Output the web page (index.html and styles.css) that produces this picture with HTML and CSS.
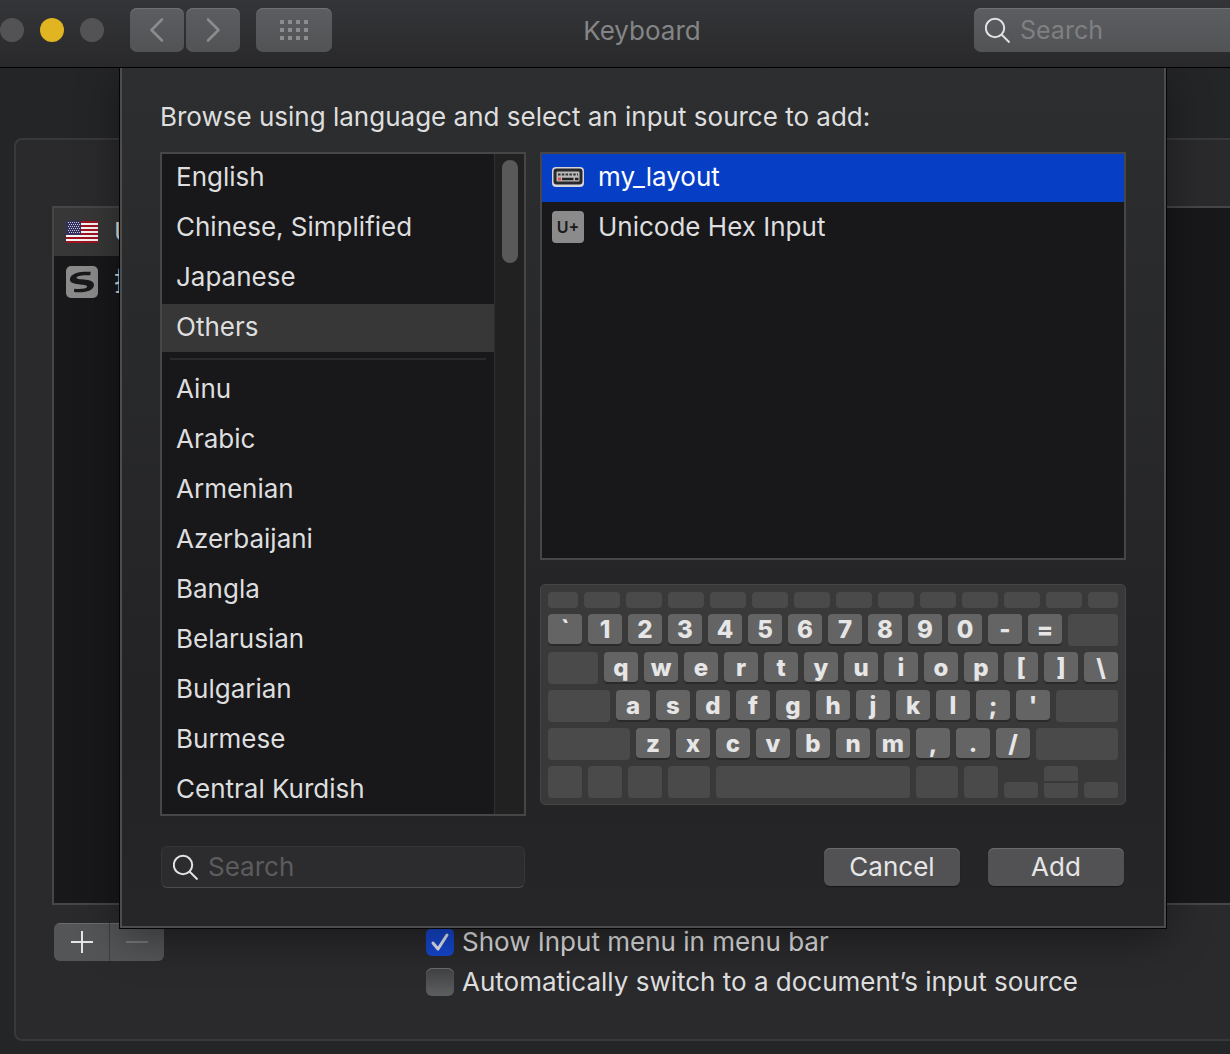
FILE: index.html
```html
<!DOCTYPE html>
<html lang="en">
<head>
<meta charset="utf-8">
<meta name="viewport" content="width=device-width, initial-scale=1">
<title>Keyboard</title>
<link rel="stylesheet" href="styles.css">
</head>
<body>
<header class="toolbar">
  <div class="lights">
    <span class="light"></span><span class="light light-minimize"></span><span class="light"></span>
  </div>
  <nav class="nav">
    <button class="tool" type="button" aria-label="Back"><svg width="54" height="44" viewBox="0 0 54 44"><path d="M32 11.500 21.500 22 32 32.500" fill="none" stroke="#8b8c8e" stroke-width="2.600" stroke-linecap="round" stroke-linejoin="round"/></svg></button>
    <button class="tool" type="button" aria-label="Forward"><svg width="54" height="44" viewBox="0 0 54 44"><path d="M22 11.500 32.500 22 22 32.500" fill="none" stroke="#8b8c8e" stroke-width="2.600" stroke-linecap="round" stroke-linejoin="round"/></svg></button>
  </nav>
  <button class="tool tool-grid" type="button" aria-label="Show all"><svg width="28" height="20" viewBox="0 0 28 20"><path d="M0 0h4v4H0zM8 0h4v4H8zM16 0h4v4h-4zM24 0h4v4h-4zM0 8h4v4H0zM8 8h4v4H8zM16 8h4v4h-4zM24 8h4v4h-4zM0 16h4v4H0zM8 16h4v4H8zM16 16h4v4h-4zM24 16h4v4h-4z" fill="#8b8c8e"/></svg></button>
  <h1 class="title">Keyboard</h1>
  <label class="search search-toolbar">
    <svg width="26" height="26" viewBox="0 0 26 26"><g fill="none" stroke="#e2e2e3" stroke-width="2"><circle cx="10" cy="11" r="9.200"/><path d="m16.500 17.500 8 8"/></g></svg>
    <input type="search" placeholder="Search" aria-label="Search preferences">
  </label>
</header>

<main class="window">
  <section class="pane">
    <div class="pane-body">
      <ul class="sources">
        <li class="source source-selected">
          <svg width="32" height="22" viewBox="0 0 32 22"><path fill="#f5f5f5" d="M0 0h32v22H0z"/><path d="M0 1h32M0 5h32M0 9h32M0 13h32M0 17h32M0 21h32" stroke="#a01420" stroke-width="2"/><path fill="#34315f" d="M0 0h15v14H0z"/><path d="M2 1.500h12M3 3.500h11M2 5.500h12M3 7.500h11M2 9.500h12M3 11.500h11" stroke="#c9c8da" stroke-width="1" stroke-dasharray="1 1"/></svg>
          <span>U.S.</span>
        </li>
        <li class="source">
          <svg width="32" height="32" viewBox="0 0 32 32"><rect width="32" height="32" rx="5" fill="#8b8b8c"/><path fill="#19191b" d="M24.700 5.800 24.300 9.200C18 9 11.500 9.500 10.500 11.500c-.5 2 6 1.500 11.500 2.500 5 1 6.700 3.500 5.700 6.500-1.700 4.500-8 5.700-13.700 5.700-3.500 0-6-.3-6-.3L8.200 22.700c6 .5 11.800.3 12.800-1.700.8-2-4-2-8.500-2.700C6.500 17.500 3.200 16 4 12.500 5 8 12 6 18 5.800c3 0 5 0 6.700 0z"/></svg>
          <span>搜</span>
        </li>
      </ul>
      <div class="preview"></div>
    </div>
    <div class="pane-footer">
      <div class="segmented">
        <button type="button" aria-label="Add input source"><svg width="22" height="22" viewBox="0 0 22 22"><path d="M11 0v22M0 11h22" stroke="#e6e6e6" stroke-width="2"/></svg></button>
        <button type="button" aria-label="Remove input source" disabled><svg width="22" height="22" viewBox="0 0 22 22"><path d="M0 11h22" stroke="#77787a" stroke-width="2"/></svg></button>
      </div>
      <div class="options">
        <label class="option"><input class="check" type="checkbox" checked><span>Show Input menu in menu bar</span></label>
        <label class="option"><input class="check" type="checkbox"><span>Automatically switch to a document’s input source</span></label>
      </div>
    </div>
  </section>

  <section class="sheet" role="dialog" aria-labelledby="prompt">
    <h2 class="prompt" id="prompt">Browse using language and select an input source to add:</h2>
    <div class="columns">
      <div class="languages">
        <ul class="language-list" role="listbox" aria-label="Languages">
          <li class="language" role="option">English</li>
          <li class="language" role="option">Chinese, Simplified</li>
          <li class="language" role="option">Japanese</li>
          <li class="language language-selected" role="option" aria-selected="true">Others</li>
          <li class="divider" role="presentation"></li>
          <li class="language" role="option">Ainu</li>
          <li class="language" role="option">Arabic</li>
          <li class="language" role="option">Armenian</li>
          <li class="language" role="option">Azerbaijani</li>
          <li class="language" role="option">Bangla</li>
          <li class="language" role="option">Belarusian</li>
          <li class="language" role="option">Bulgarian</li>
          <li class="language" role="option">Burmese</li>
          <li class="language" role="option">Central Kurdish</li>
        </ul>
        <div class="scrollbar"><span class="thumb"></span></div>
      </div>
      <div class="detail">
        <ul class="layouts" role="listbox" aria-label="Input sources">
          <li class="layout layout-selected" role="option" aria-selected="true">
            <svg width="32" height="32" viewBox="0 0 32 32"><rect y="6" width="32" height="20" rx="4" fill="#d5d6da"/><rect x="1.500" y="7.500" width="29" height="16" rx="3" fill="#29292b"/><rect x="4.500" y="10.500" width="23" height="10" rx="1" fill="#b9b9b9"/><path d="M6 13.500h20" stroke="#333" stroke-width="2" stroke-dasharray="2.500 1.300"/><path d="M10 18h11.500M23 18h3.500" stroke="#222" stroke-width="2.500"/><path d="M6 18h3" stroke="#e0524b" stroke-width="3"/></svg>
            <span>my_layout</span>
          </li>
          <li class="layout" role="option"><span class="badge">U+</span><span>Unicode Hex Input</span></li>
        </ul>
        <div class="keyboard">
          <div class="row row-short"><i class="blank w30"></i><i class="blank w36"></i><i class="blank w36"></i><i class="blank w36"></i><i class="blank w36"></i><i class="blank w36"></i><i class="blank w36"></i><i class="blank w36"></i><i class="blank w36"></i><i class="blank w36"></i><i class="blank w36"></i><i class="blank w36"></i><i class="blank w36"></i><i class="blank w30"></i></div>
          <div class="row"><kbd>`</kbd><kbd>1</kbd><kbd>2</kbd><kbd>3</kbd><kbd>4</kbd><kbd>5</kbd><kbd>6</kbd><kbd>7</kbd><kbd>8</kbd><kbd>9</kbd><kbd>0</kbd><kbd>-</kbd><kbd>=</kbd><i class="blank w50"></i></div>
          <div class="row"><i class="blank w50"></i><kbd>q</kbd><kbd>w</kbd><kbd>e</kbd><kbd>r</kbd><kbd>t</kbd><kbd>y</kbd><kbd>u</kbd><kbd>i</kbd><kbd>o</kbd><kbd>p</kbd><kbd>[</kbd><kbd>]</kbd><kbd>\</kbd></div>
          <div class="row"><i class="blank w62"></i><kbd>a</kbd><kbd>s</kbd><kbd>d</kbd><kbd>f</kbd><kbd>g</kbd><kbd>h</kbd><kbd>j</kbd><kbd>k</kbd><kbd>l</kbd><kbd>;</kbd><kbd>'</kbd><i class="blank w62"></i></div>
          <div class="row"><i class="blank w82"></i><kbd>z</kbd><kbd>x</kbd><kbd>c</kbd><kbd>v</kbd><kbd>b</kbd><kbd>n</kbd><kbd>m</kbd><kbd>,</kbd><kbd>.</kbd><kbd>/</kbd><i class="blank w82"></i></div>
          <div class="row"><i class="blank w34"></i><i class="blank w34"></i><i class="blank w34"></i><i class="blank w42"></i><i class="blank w194"></i><i class="blank w42"></i><i class="blank w34"></i><i class="blank w34 half"></i><span class="updown w34"><i class="blank up"></i><i class="blank down"></i></span><i class="blank w34 half"></i></div>
        </div>
      </div>
    </div>
    <footer class="actions">
      <label class="search search-sheet">
        <svg width="26" height="26" viewBox="0 0 26 26"><g fill="none" stroke="#e2e2e3" stroke-width="2"><circle cx="10" cy="11" r="9.200"/><path d="m16.500 17.500 8 8"/></g></svg>
        <input type="search" placeholder="Search" aria-label="Search languages">
      </label>
      <div class="buttons">
        <button class="push" type="button">Cancel</button>
        <button class="push" type="button">Add</button>
      </div>
    </footer>
  </section>
</main>
</body>
</html>
```
FILE: styles.css
```css
* {
  box-sizing: border-box;
}

body {
  display: flex;
  flex-direction: column;
  min-height: 100vh;
  margin: 0;
  overflow-x: hidden;
  background: #242527;
  color: #dededf;
  font: 26px/32px Inter, "Noto Sans CJK SC", sans-serif;
}

ul {
  margin: 0;
  padding: 0;
  list-style: none;
}

svg {
  display: block;
  flex: none;
}

button {
  padding: 0;
  border: 0;
  color: inherit;
  font: inherit;
}

/* Toolbar */
.toolbar {
  display: flex;
  align-items: flex-start;
  height: 68px;
  padding-top: 8px;
  border-bottom: 1px solid #000;
  background: linear-gradient(#343538, #29292b);
}

.lights {
  display: flex;
  gap: 16px;
  padding: 10px 26px 0 0;
}

.light {
  width: 24px;
  height: 24px;
  border-radius: 50%;
  background: #535355;
}

.light-minimize {
  background: #e1b522;
}

.nav {
  display: flex;
  gap: 2px;
  margin-right: 16px;
}

.tool {
  display: flex;
  align-items: center;
  justify-content: center;
  width: 54px;
  height: 44px;
  border-radius: 7px;
  background: linear-gradient(#5c5d60, #525355);
  box-shadow: inset 0 1px #707173;
}

.tool-grid {
  width: 76px;
}

.title {
  flex: 1;
  margin: 0;
  padding: 7px 22px 0 0;
  color: #848587;
  font-size: 26px;
  font-weight: 400;
  text-align: center;
}

.search {
  display: flex;
  align-items: center;
  gap: 9px;
  padding-left: 11px;
}

.search input {
  flex: 1;
  min-width: 0;
  padding: 0;
  border: 0;
  outline: 0;
  background: none;
  color: inherit;
  font: inherit;
}

.search input::placeholder {
  color: #5c5c5e;
  opacity: 1;
}

.search-toolbar {
  width: 256px;
  height: 44px;
  border-radius: 7px 0 0 7px;
  background: linear-gradient(#5c5d60, #525355);
  box-shadow: inset 0 1px #707173;
}

.search-toolbar input {
  font-size: 25px;
}

.search-toolbar input::placeholder {
  color: #7f8082;
}

/* Preference pane behind the sheet */
.window {
  position: relative;
  display: flex;
  flex: 1;
  padding: 70px 0 13px 14px;
  overflow: hidden;
}

.pane {
  display: flex;
  flex: 1;
  flex-direction: column;
  padding: 66px 0 41px 36px;
  border: 2px solid #38393b;
  border-right: 0;
  border-radius: 8px 0 0 8px;
  background: #2a2a2c;
}

.pane-body {
  display: grid;
  flex: 1;
  grid-template-columns: 1fr 2fr;
  gap: 16px;
}

.sources {
  border: 2px solid #464647;
  background: #18181a;
}

.preview {
  border: 2px solid #464647;
  border-right: 0;
  background: #18181a;
}

.source {
  display: flex;
  align-items: center;
  gap: 16px;
  height: 48px;
  margin-bottom: 2px;
  padding-left: 12px;
}

.source-selected {
  background: #373737;
}

.pane-footer {
  display: flex;
  align-items: flex-start;
  gap: 262px;
  padding: 18px 0 0 2px;
}

.segmented {
  display: flex;
  gap: 1px;
  overflow: hidden;
  border-radius: 6px;
  background: #3e3f41;
}

.segmented button {
  display: flex;
  align-items: center;
  justify-content: center;
  width: 55px;
  height: 38px;
  background: #545557;
  box-shadow: inset 0 1px #6b6c6e;
}

.segmented button:last-child {
  width: 54px;
}

.options {
  display: flex;
  flex-direction: column;
  gap: 8px;
  padding-top: 3px;
}

.option {
  display: flex;
  align-items: center;
  gap: 8px;
}

.check {
  width: 28px;
  height: 28px;
  margin: 0;
  appearance: none;
  border-radius: 6px;
  background: linear-gradient(#414244, #5d5e60);
  box-shadow: inset 0 1px #6a6b6d;
}

.check:checked {
  background: #1546cd url("data:image/svg+xml,%3Csvg xmlns='http://www.w3.org/2000/svg' viewBox='0 0 28 28'%3E%3Cpath d='M7 15l5 6 9-14' fill='none' stroke='%23e4e8f4' stroke-width='3' stroke-linecap='round' stroke-linejoin='round'/%3E%3C/svg%3E");
  box-shadow: none;
}

/* Sheet that slides out from under the toolbar */
.sheet {
  position: absolute;
  top: 0;
  right: 64px;
  left: 120px;
  padding: 33px 38px 38px;
  border: 2px solid #4d4d4e;
  border-top: 0;
  background: linear-gradient(#2d2e2f, #232325 75%, #262628);
  box-shadow: 0 0 0 1px #050506, 0 10px 40px rgba(0, 0, 0, 0.4);
}

.prompt {
  margin: 0 0 19px;
  font-size: 26px;
  font-weight: 400;
}

.columns {
  display: grid;
  grid-template-columns: 366fr 586fr;
  gap: 14px;
}

.languages {
  display: flex;
  border: 2px solid #464647;
  background: #18181a;
}

.language-list {
  display: flex;
  flex: 1;
  flex-direction: column;
  gap: 2px;
}

.language {
  padding: 7px 0 9px 14px;
}

.language-selected {
  background: #373737;
}

.divider {
  height: 2px;
  margin: 4px 8px;
  background: #2a2a2b;
}

.scrollbar {
  width: 30px;
  padding: 6px 0 0 7px;
  border-left: 1px solid #303031;
  background: #212122;
}

.thumb {
  display: block;
  width: 16px;
  height: 103px;
  border-radius: 8px;
  background: #595959;
}

.detail {
  display: flex;
  flex-direction: column;
  gap: 24px;
  padding-bottom: 11px;
}

.layouts {
  flex: 1;
  border: 2px solid #464647;
  background: #18181a;
}

.layout {
  display: flex;
  align-items: center;
  gap: 14px;
  height: 48px;
  margin-bottom: 2px;
  padding: 0 0 2px 10px;
}

.layout-selected {
  background: #063ec6;
  color: #fff;
}

.badge {
  width: 32px;
  height: 32px;
  border-radius: 4px;
  background: #8b8b8c;
  color: #19191b;
  font-size: 16px;
  font-weight: 600;
  text-align: center;
}

/* Keyboard preview */
.keyboard {
  display: flex;
  flex-direction: column;
  gap: 6px;
  padding: 7px 7px 6px;
  border: 1px solid #454546;
  border-radius: 5px;
  background: #393939;
}

.row {
  display: flex;
  gap: 6px;
  height: 32px;
}

.row-short {
  height: 16px;
}

.row kbd {
  flex: 34 1 0;
  min-width: 0;
  height: 30px;
  border-radius: 4px;
  background: #646464;
  box-shadow: 0 2px #2a2a2a;
  color: #e6e6e6;
  font: 800 24px/32px Inter, sans-serif;
  text-align: center;
}

.blank {
  border-radius: 4px;
  background: #4a4a4a;
}

.w30 { flex: 30 1 0; }
.w34 { flex: 34 1 0; }
.w36 { flex: 36 1 0; }
.w42 { flex: 42 1 0; }
.w50 { flex: 50 1 0; }
.w62 { flex: 62 1 0; }
.w82 { flex: 82 1 0; }
.w194 { flex: 194 1 0; }

.half {
  align-self: flex-end;
  height: 16px;
}

.updown {
  display: flex;
  flex-direction: column;
  gap: 2px;
}

.updown .blank {
  flex: 1;
}

.up {
  border-radius: 4px 4px 0 0;
}

.down {
  border-radius: 0 0 4px 4px;
}

/* Sheet footer */
.actions {
  display: flex;
  align-items: center;
  justify-content: space-between;
  padding: 30px 2px 0 1px;
}

.search-sheet {
  width: 364px;
  height: 42px;
  border: 1px solid #363637;
  border-bottom-color: #4c4c4e;
  border-radius: 6px;
  background: #2c2c2e;
}

.buttons {
  display: flex;
  gap: 28px;
}

.push {
  width: 136px;
  height: 38px;
  border-radius: 6px;
  background: #525254;
  box-shadow: inset 0 1px #6b6b6c, 0 1px 1px #161617;
  color: #e6e6e6;
}
```
